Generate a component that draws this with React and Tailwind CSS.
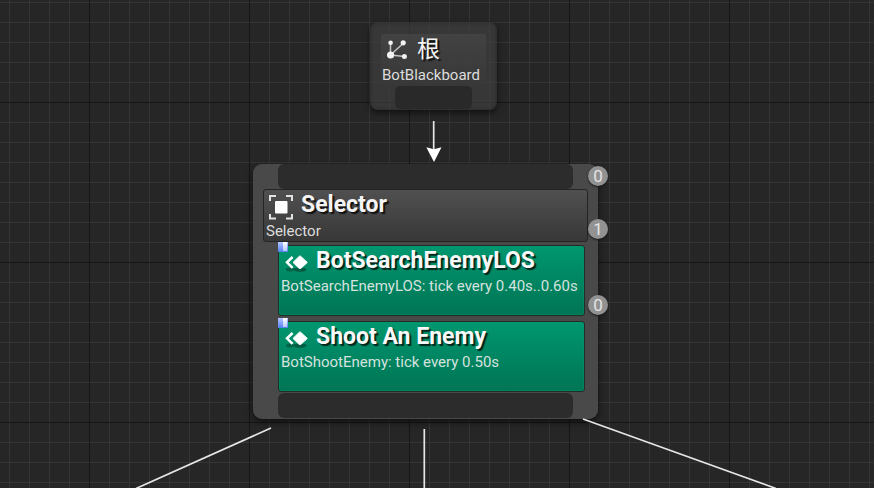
const GRID_START = { x: 9, y: 2 };

function Grid() {
  const columns = Array.from({ length: 44 }, (_, i) => GRID_START.x + i * 20);
  const rows = Array.from({ length: 25 }, (_, i) => GRID_START.y + i * 20);
  const majorX = (x) => (x - 89) % 160 === 0;
  const majorY = (y) => (y - 102) % 160 === 0;
  return (
    <svg className="absolute inset-0" width="874" height="488" shapeRendering="crispEdges">
      {columns.filter((x) => !majorX(x)).map((x) => <rect key={x} x={x} y="0" width="1" height="488" fill="#353535" />)}
      {rows.filter((y) => !majorY(y)).map((y) => <rect key={y} x="0" y={y} width="874" height="1" fill="#353535" />)}
      {columns.filter(majorX).map((x) => <rect key={x} x={x} y="0" width="1" height="488" fill="#161616" />)}
      {rows.filter(majorY).map((y) => <rect key={y} x="0" y={y} width="874" height="1" fill="#161616" />)}
    </svg>
  );
}

function Wires() {
  return (
    <svg className="absolute inset-0" width="874" height="488" fill="none" stroke="#e6e6e6" strokeWidth="1.7">
      <path d="M433.7 121V150" />
      <path d="M426.3 147.3L433.8 149.2L441.5 147.3L434 162Z" fill="#fff" stroke="none" />
      <path d="M271 428L136 488.5M424.3 429V488M583 419L776 488.5" />
    </svg>
  );
}

function RootIcon() {
  return (
    <svg className="shrink-0" width="22" height="22" viewBox="0 0 22 22">
      <g stroke="#c4c4c4" strokeWidth="1.5">
        <path d="M4.5 4V16M4.5 16L17 4.5M4.5 16L18.5 17.5" />
      </g>
      <g fill="#f2f2f2">
        <circle cx="4.6" cy="3.8" r="2.3" />
        <circle cx="17.2" cy="3.8" r="2.6" />
        <circle cx="4.6" cy="16" r="3.6" />
        <circle cx="18.4" cy="17.4" r="2.5" />
      </g>
    </svg>
  );
}

function SelectorIcon() {
  return (
    <svg className="shrink-0" width="26" height="26" viewBox="0 0 26 26">
      <path d="M2 7V2H8M18 2H24V7M24 20V24.5H18M8 24.5H2V20" fill="none" stroke="#e2e2e2" strokeWidth="2" />
      <rect x="7" y="7" width="12.5" height="12.5" rx="1" fill="#fff" />
    </svg>
  );
}

function ServiceIcon() {
  return (
    <svg className="shrink-0" width="26" height="22" viewBox="0 0 26 22">
      <ellipse cx="17" cy="16.6" rx="6.5" ry="2.2" fill="#003d2a" opacity=".6" />
      <ellipse cx="7" cy="16.6" rx="4" ry="2" fill="#003d2a" opacity=".5" />
      <path d="M9.6 4L4 9.3L9.6 14.8" fill="none" stroke="#fff" strokeWidth="2.5" />
      <path d="M16.4 3.2H17.6L24.3 9.4L17.8 15.4H16.2L10 9.4Z" fill="#fff" stroke="#fff" strokeLinejoin="round" />
    </svg>
  );
}

function Service({ title, detail, className }) {
  return (
    <section className={`relative ml-[15px] h-[71px] w-[307px] rounded-[3px] border border-[#222c28] bg-linear-to-b from-[#00976f] to-[#007555] shadow-[inset_0_0_0_1px_rgba(0,150,105,.45)] ${className}`}>
      <i className="absolute -top-[4px] -left-[1px] flex h-[10px] w-[10px] bg-linear-to-b from-[#b5c7ff] to-[#547df0]">
        <i className="ml-[5px] h-[9px] w-[4px] bg-linear-to-b from-white to-[#b9cbff]" />
      </i>
      <div className="flex h-[30px] items-start pt-[1px] pl-[4px]">
        <div className="pt-[6px]"><ServiceIcon /></div>
        <h2 className="ml-[7px] text-[23px] leading-[28px] font-bold whitespace-nowrap text-[#f8f8f8] [text-shadow:2px_2px_1px_#00251a]">{title}</h2>
      </div>
      <p className="pl-[2px] text-[15px] leading-[20px] whitespace-nowrap text-[#d5e2de]">{detail}</p>
    </section>
  );
}

function Badge({ children, className }) {
  return (
    <span className={`absolute left-[335px] flex h-5 w-5 items-center justify-center rounded-full bg-[#929292] text-[17px] leading-5 text-[#e4e4e4] shadow-[0_1px_2px_#171717] ${className}`}>
      {children}
    </span>
  );
}

export default function App() {
  return (
    <main className="relative h-[488px] w-[874px] overflow-hidden bg-[#262626] font-[Roboto,'Noto_Sans_CJK_SC',sans-serif]">
      <Grid />

      <article className="absolute top-[22px] left-[370px] flex h-[88px] w-[127px] flex-col items-center rounded-lg bg-[#404040]/65 pt-3 shadow-[0_3px_6px_rgba(0,0,0,.55),inset_0_0_3px_1px_rgba(30,30,30,.35)]">
        <div className="h-[51px] w-[105px] rounded-[2px] bg-linear-to-b from-[#454545]/80 to-[#383838]/80">
          <div className="flex h-[31px] items-center pl-[5px]">
            <RootIcon />
            <h1 className="ml-[9px] text-[23px] leading-[31px] text-[#f4f4f4] [text-shadow:2px_2px_1px_#111]">根</h1>
          </div>
          <p className="pl-[1px] text-[15px] leading-5 whitespace-nowrap text-[#dddddd]">BotBlackboard</p>
        </div>
        <div className="mt-px -ml-[1px] h-[23px] w-[77px] rounded-[5px] bg-[#292929]" />
      </article>

      <article className="absolute top-[164px] left-[253px] flex h-[255px] w-[345px] flex-col rounded-[9px] bg-[#4b4b4b]/95 pl-[10px] shadow-[0_3px_7px_rgba(0,0,0,.6)]">
        <div className="ml-[15px] h-[25px] w-[295px] shrink-0 rounded-[6px] bg-[#2c2c2c]" />
        <header className="h-[53px] w-[325px] shrink-0 rounded-[3px] border border-[#242424] bg-linear-to-b from-[#505050] to-[#383838]">
          <div className="flex h-[31px] items-start pl-[4px]">
            <div className="pt-[4px]"><SelectorIcon /></div>
            <h2 className="ml-[7px] pt-[1px] text-[23px] leading-[28px] font-bold text-[#f4f4f4] [text-shadow:2px_2px_1px_#111]">Selector</h2>
          </div>
          <p className="pl-[2px] text-[15px] leading-5 text-[#dddddd]">Selector</p>
        </header>
        <Service className="mt-[3px]" title="BotSearchEnemyLOS" detail="BotSearchEnemyLOS: tick every 0.40s..0.60s" />
        <Service className="mt-[5px]" title="Shoot An Enemy" detail="BotShootEnemy: tick every 0.50s" />
        <div className="mt-px ml-[15px] h-[25px] w-[295px] shrink-0 rounded-[6px] bg-[#2c2c2c]" />
        <Badge className="top-[2px]">0</Badge>
        <Badge className="top-[55px]">1</Badge>
        <Badge className="top-[131px]">0</Badge>
      </article>
      <Wires />
    </main>
  );
}
